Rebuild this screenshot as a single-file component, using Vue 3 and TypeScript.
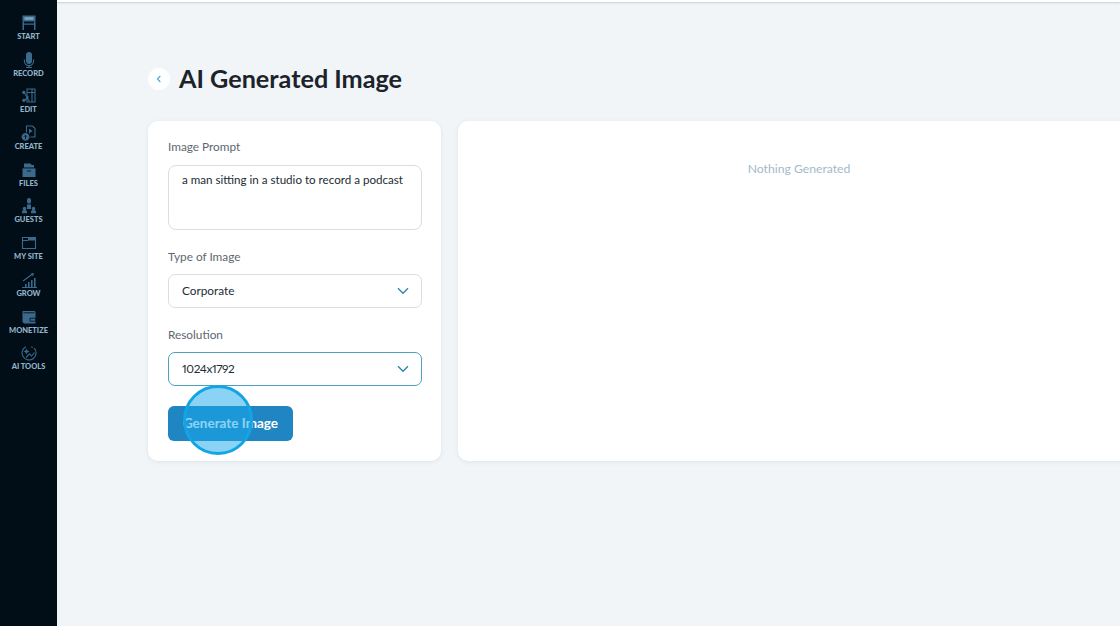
<script setup lang="ts">
interface Shape { d: string; kind: 'f' | 's' | 'l' | 'd' }
interface NavItem { label: string; shapes: Shape[] }

const nav: NavItem[] = [
  { label: 'START', shapes: [
    { kind: 'f', d: 'M1.500 .5h13v6h-13z' },
    { kind: 'l', d: 'M3.500 2.200h9v2.600h-9z' },
    { kind: 'f', d: 'M1.500 6.500H3V15H1.500zM13 6.500h1.500V15H13zM3 8.600h10v1.200H3z' },
  ] },
  { label: 'RECORD', shapes: [
    { kind: 'f', d: 'M8 0a3 3 0 0 1 3 3v6a3 3 0 0 1-6 0V3a3 3 0 0 1 3-3z' },
    { kind: 's', d: 'M3.400 7.500V9a4.600 4.600 0 0 0 9.200 0V7.500M8 13.600V15.500M5 15.500h6' },
  ] },
  { label: 'EDIT', shapes: [
    { kind: 's', d: 'M6 1h8v13H6zM6 4.500h8M11 1v13' },
    { kind: 's', d: 'M3.500 5 8.500 13.500M3.500 12.500l4-4' },
    { kind: 'f', d: 'M2.800 2.800a1.600 1.600 0 1 0 .01 0zM2.800 10.800a1.600 1.600 0 1 0 .01 0z' },
  ] },
  { label: 'CREATE', shapes: [
    { kind: 's', d: 'M5.500 7.500V1h6l2.500 2.500V12H9.500' },
    { kind: 'f', d: 'M8 3.600l3.600 2.400L8 8.400z' },
    { kind: 'f', d: 'M4.500 8a3.900 3.900 0 1 0 .01 0z' },
    { kind: 'd', d: 'M4.500 14.200v-3.800M3 11.700l1.500-1.500L6 11.700' },
  ] },
  { label: 'FILES', shapes: [
    { kind: 'f', d: 'M3 1.500h6.500l1.200 1.500H13v2.500H3z' },
    { kind: 'f', d: 'M1.500 6.400h13V15h-13z' },
    { kind: 'd', d: 'M6 9h4' },
  ] },
  { label: 'GUESTS', shapes: [
    { kind: 'f', d: 'M8 0a2 2 0 0 1 2 2v1.800a2 2 0 0 1-4 0V2a2 2 0 0 1 2-2zM6 6.500h4v4.500H6z' },
    { kind: 'f', d: 'M3.500 8.800a1.800 1.800 0 1 1-.01 0zM12.500 8.800a1.800 1.800 0 1 1-.01 0zM1 13.500c.3-1 1.300-1.500 2.500-1.500s2.200.5 2.500 1.500v1.800H1zM10 13.500c.3-1 1.300-1.500 2.500-1.500s2.200.5 2.500 1.500v1.800h-5z' },
  ] },
  { label: 'MY SITE', shapes: [
    { kind: 's', d: 'M1.500 2.500h13v11h-13z' },
    { kind: 'f', d: 'M7 2.500h7.500v3H7z' },
    { kind: 's', d: 'M1.500 5.500H7' },
  ] },
  { label: 'GROW', shapes: [
    { kind: 'f', d: 'M4 12h1.600v3H4zM7 10h1.600v5H7zM10 8h1.600v7H10zM13 6h1.600v9H13z' },
    { kind: 's', d: 'M1 15.500h15M2 9 11 2.500' },
    { kind: 'f', d: 'M9.500 1.500 13 1l-1 3.300z' },
  ] },
  { label: 'MONETIZE', shapes: [
    { kind: 'f', d: 'M1.500 2h12l1 1v11.500H3l-1.500-1.500z' },
    { kind: 'd', d: 'M2.500 3.800h11M9 9.200h5.500v3H9z' },
  ] },
  { label: 'AI TOOLS', shapes: [
    { kind: 's', d: 'M4.800 1.800a7 7 0 1 0 8.400 1.400' },
    { kind: 'f', d: 'M5.500 3.500l.9 2.100 2.100.9-2.100.9-.9 2.100-.9-2.100-2.100-.9 2.100-.9z' },
    { kind: 's', d: 'M5 12.500 8.500 8.800 10.500 11l3-3.500M10.500 1.500l1 1.500' },
  ] },
]

const fieldSelects = [
  { label: 'Type of Image', value: 'Corporate', active: false },
  { label: 'Resolution', value: '1024x1792', active: true },
]
</script>

<template>
  <div class="app">
    <aside class="sidebar">
      <div v-for="item in nav" :key="item.label" class="nav-item">
        <svg class="nav-icon" viewBox="0 0 16 16" aria-hidden="true">
          <path v-for="(s, i) in item.shapes" :key="i" :d="s.d" :class="s.kind" />
        </svg>
        <span class="nav-label">{{ item.label }}</span>
      </div>
    </aside>

    <main class="main">
      <div class="topbar"></div>
      <div class="page">
        <header class="heading">
          <button class="back" type="button" aria-label="Back">
            <svg viewBox="0 0 10 10" width="10" height="10" aria-hidden="true">
              <path d="M6.300 2 3.500 5l2.800 3" />
            </svg>
          </button>
          <h1 class="title">AI Generated Image</h1>
        </header>

        <div class="columns">
          <section class="card form">
            <div class="label first">Image Prompt</div>
            <div class="prompt">a man sitting in a studio to record a podcast</div>

            <template v-for="f in fieldSelects" :key="f.label">
              <div class="label">{{ f.label }}</div>
              <div class="select" :class="{ active: f.active }">
                <span class="value">{{ f.value }}</span>
                <svg viewBox="0 0 12 8" width="12" height="8" aria-hidden="true">
                  <path d="M1 1.200 6 6.200l5-5" />
                </svg>
              </div>
            </template>

            <button class="generate" type="button">Generate Image</button>
          </section>

          <section class="card result">
            <p class="empty">Nothing Generated</p>
          </section>
        </div>
      </div>
    </main>

    <div class="click-marker"></div>
  </div>
</template>

<style scoped>
.app {
  position: relative;
  display: flex;
  width: 1120px;
  height: 626px;
  overflow: hidden;
  background: #f1f5f8;
  font-family: Lato, "Noto Sans", sans-serif;
}

.sidebar {
  flex: 0 0 57px;
  display: flex;
  flex-direction: column;
  padding-top: 15px;
  background: #020e17;
}
.nav-item {
  height: 36.700px;
  display: flex;
  flex-direction: column;
  align-items: center;
  flex-shrink: 0;
}
.nav-icon {
  width: 16px;
  height: 16px;
  flex-shrink: 0;
}
.nav-icon .f { fill: #3b6a8c; }
.nav-icon .l { fill: #7da3bd; }
.nav-icon .s { fill: none; stroke: #3b6a8c; stroke-width: 1.100; }
.nav-icon .d { fill: none; stroke: #0b1c2a; stroke-width: 1; }
.nav-label {
  margin-top: 1px;
  font-size: 7.500px;
  line-height: 9px;
  font-weight: 900;
  white-space: nowrap;
  color: #93b4cb;
}

.main {
  flex: 1 1 auto;
  min-width: 0;
  display: flex;
  flex-direction: column;
}
.topbar {
  height: 2px;
  flex-shrink: 0;
  background: #ffffff;
  box-shadow: 0 1px 2px rgba(40, 60, 60, 0.22);
}
.page {
  padding: 65px 0 0 91px;
}
.heading {
  display: flex;
  align-items: center;
  gap: 9px;
  height: 24px;
}
.back {
  width: 22px;
  height: 22px;
  padding: 0;
  border: 0;
  border-radius: 50%;
  background: #ffffff;
  display: flex;
  align-items: center;
  justify-content: center;
}
.back path {
  fill: none;
  stroke: #4aa6cf;
  stroke-width: 1.100;
}
.title {
  margin: 0;
  font-size: 25.200px;
  line-height: 22px;
  padding-bottom: 2px;
  font-weight: 700;
  color: #1c232a;
  white-space: nowrap;
}

.columns {
  display: flex;
  gap: 17px;
  margin-top: 30px;
}
.card {
  background: #ffffff;
  border-radius: 10px;
  box-shadow: 0 1px 4px rgba(60, 80, 100, 0.1);
  height: 340px;
  flex-shrink: 0;
}
.form {
  width: 293px;
  padding: 17px 19px 0 20px;
  box-sizing: border-box;
}
.result {
  width: 682px;
  text-align: center;
}
.empty {
  margin: 40px 0 0;
  font-size: 12.200px;
  line-height: 16px;
  font-weight: 400;
  color: #a3bacb;
}

.label {
  margin-top: 18px;
  margin-bottom: 8px;
  font-size: 11.800px;
  line-height: 18px;
  color: #5d676f;
}
.label.first {
  margin-top: 0;
  margin-bottom: 9px;
}
.prompt {
  box-sizing: border-box;
  height: 65px;
  padding: 6px 13px;
  border: 1px solid #d9dee3;
  border-radius: 8px;
  font-size: 11.600px;
  line-height: 16px;
  color: #222b33;
  white-space: nowrap;
}
.select {
  box-sizing: border-box;
  height: 34px;
  padding: 0 12px 0 13px;
  border: 1px solid #d9dee3;
  border-radius: 7px;
  display: flex;
  align-items: center;
  justify-content: space-between;
  font-size: 11.800px;
  font-variant-numeric: proportional-nums;
  color: #222b33;
}
.value {
  padding-bottom: 2px;
}
.select.active .value {
  letter-spacing: -0.4px;
}
.select.active {
  border-color: #4f9fbe;
}
.select path {
  fill: none;
  stroke: #2f88a8;
  stroke-width: 1.400;
}
.generate {
  display: block;
  width: 125px;
  height: 35px;
  margin-top: 20px;
  padding: 0 0 2px;
  border: 0;
  border-radius: 6px;
  background: #1f86c3;
  color: #ffffff;
  font-family: inherit;
  font-size: 13.500px;
  font-weight: 700;
}

.click-marker {
  position: absolute;
  left: 183px;
  top: 385px;
  width: 70px;
  height: 70px;
  box-sizing: border-box;
  border: 3px solid #12a5e4;
  border-radius: 50%;
  background: rgba(25, 169, 235, 0.51);
}
</style>
